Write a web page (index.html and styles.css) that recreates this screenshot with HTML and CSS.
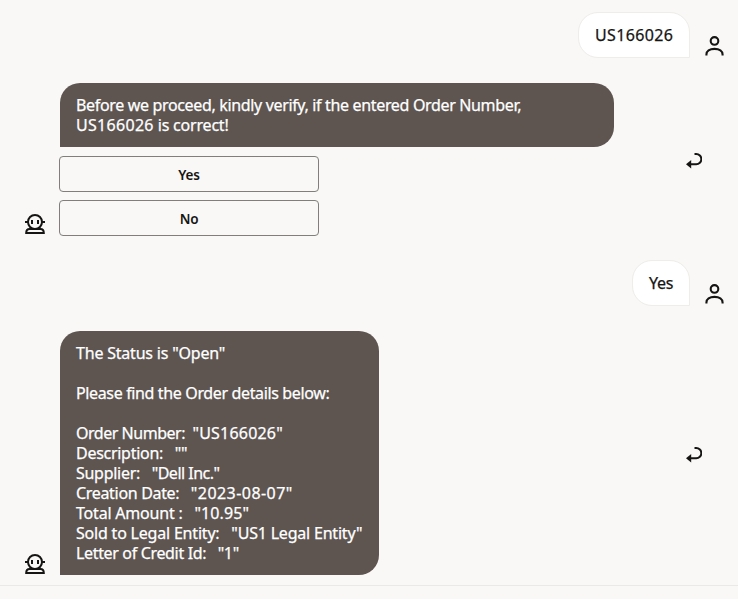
FILE: index.html
```html
<!DOCTYPE html>
<html lang="en">
<head>
<meta charset="utf-8">
<title>Order assistant</title>
<link rel="stylesheet" href="styles.css">
</head>
<body>
<svg class="symbols" aria-hidden="true">
  <symbol id="user" viewBox="0 0 20 20"><circle cx="10" cy="4.700" r="4"/><path d="M1.500 20V19c0-3.500 3.300-6 8.500-6s8.500 2.500 8.500 6v1"/></symbol>
  <symbol id="bot" viewBox="0 0 20 20"><circle cx="10" cy="8" r="7"/><path d="M0 8h3M17 8h3M7 6v4M13 6v4M4.600 15h10.800c2 0 3.400 1.500 3.400 4H1.200c0-2.500 1.400-4 3.400-4z"/></symbol>
  <symbol id="reply" viewBox="0 0 16 16"><path d="M8.500 1h1.700a4.800 4.800 0 0 1 0 10.300H4"/><path class="head" d="M0 11.300L5.200 7v8.600z"/></symbol>
</svg>
<main class="chat">
  <section class="row user">
    <div class="bubble light"><span class="number">US166026</span></div>
    <svg class="icon avatar"><use href="#user"/></svg>
  </section>
  <section class="row bot first">
    <svg class="icon avatar"><use href="#bot"/></svg>
    <div class="content">
      <div class="bubble dark wide">
        <p class="l1">Before we proceed, kindly verify, if the entered Order Number,</p>
        <p class="l2"><span>US166026</span> is correct!</p>
      </div>
      <div class="actions">
        <button>Yes</button>
        <button>No</button>
      </div>
    </div>
    <svg class="icon reply"><use href="#reply"/></svg>
  </section>
  <section class="row user">
    <div class="bubble light"><span class="yes">Yes</span></div>
    <svg class="icon avatar"><use href="#user"/></svg>
  </section>
  <section class="row bot second">
    <svg class="icon avatar"><use href="#bot"/></svg>
    <div class="content">
      <div class="bubble dark details">
        <p class="d1">The Status is "Open"</p>
        <p></p>
        <p class="d2">Please find the Order details below:</p>
        <p></p>
        <p class="d3">Order Number:  <span>"US166026"</span></p>
        <p class="d4">Description:   ""</p>
        <p class="d5">Supplier:   <span>"Dell Inc."</span></p>
        <p class="d6">Creation Date:   <span>"2023-08-07"</span></p>
        <p class="d7">Total Amount :   <span>"10.95"</span></p>
        <p class="d8">Sold to Legal Entity:   "US1 Legal Entity"</p>
        <p class="d9">Letter of Credit Id:   "1"</p>
      </div>
    </div>
    <svg class="icon reply"><use href="#reply"/></svg>
  </section>
</main>
<footer class="composer"></footer>
</body>
</html>
```
FILE: styles.css
```css
* { box-sizing: border-box; }
body {
  margin: 0;
  height: 599px;
  overflow: hidden;
  background: #f9f8f6;
  color: #161513;
  font: 16px/20px "Noto Sans", sans-serif;
}
.symbols { display: block; width: 0; height: 0; }
.chat { height: 585px; padding-top: 12px; }
.row { display: flex; align-items: flex-end; }
.row.user { justify-content: flex-end; padding-right: 14px; gap: 15px; }
.row.bot { padding: 0 36px 0 25px; }
.row.first { margin: 25px 0 24px; }
.row.second { margin-top: 25px; }
.icon { flex: none; fill: none; stroke: #161513; stroke-width: 2; }
.avatar { width: 20px; height: 20px; }
.user .avatar { width: 19px; margin-bottom: 2px; stroke-width: 2.200; }
.bot .avatar { margin-bottom: 1px; }
.first .avatar { margin-bottom: 2px; }
.reply { width: 16px; height: 16px; align-self: center; margin: 3px 0 0 auto; }
.second .reply { margin-top: 4px; }
.head { fill: #161513; stroke: none; }
.content { margin-left: 14px; }
.bubble { -webkit-text-stroke: .25px; }
.bubble p { margin: 0; height: 20px; white-space: pre; }
.light {
  height: 46px;
  padding: 12px 16px;
  border: 1px solid #efece9;
  border-radius: 20px 20px 0 20px;
  background: #fff;
}
.user .bubble { display: flex; }
.dark {
  margin-left: 1px;
  padding: 12px 16px;
  border-radius: 20px 20px 20px 0;
  background: #5e5551;
  color: #fff;
}
.wide { width: 554px; height: 64px; }
.details { width: 319px; height: 244px; }
.actions { display: grid; gap: 8px; width: 260px; margin-top: 9px; }
button {
  height: 36px;
  padding: 2px 0 0;
  border: 1px solid #817e7b;
  border-radius: 4px;
  background: transparent;
  color: #161513;
  font: 600 13.500px/20px "Noto Sans", sans-serif;
  letter-spacing: -.2px;
}
.number { width: 78px; letter-spacing: .35px; }
.yes { width: 24px; letter-spacing: -.3px; }
.l1 { letter-spacing: -.34px; }
.l2, .d1, .d8 { letter-spacing: -.2px; }
.l2 span { letter-spacing: .3px; }
.d2 { letter-spacing: -.36px; }
.d3 { letter-spacing: -.47px; }
.d3 span { letter-spacing: .2px; }
.d4, .d5 { letter-spacing: -.28px; }
.d5 span { letter-spacing: -.5px; }
.d6 { letter-spacing: -.32px; }
.d6 span { letter-spacing: .45px; }
.d7 { letter-spacing: -.2px; }
.d7 span { letter-spacing: .1px; }
.d9 { letter-spacing: -.34px; }
.composer { height: 14px; border-top: 1px solid #ebe9e7; }
```
